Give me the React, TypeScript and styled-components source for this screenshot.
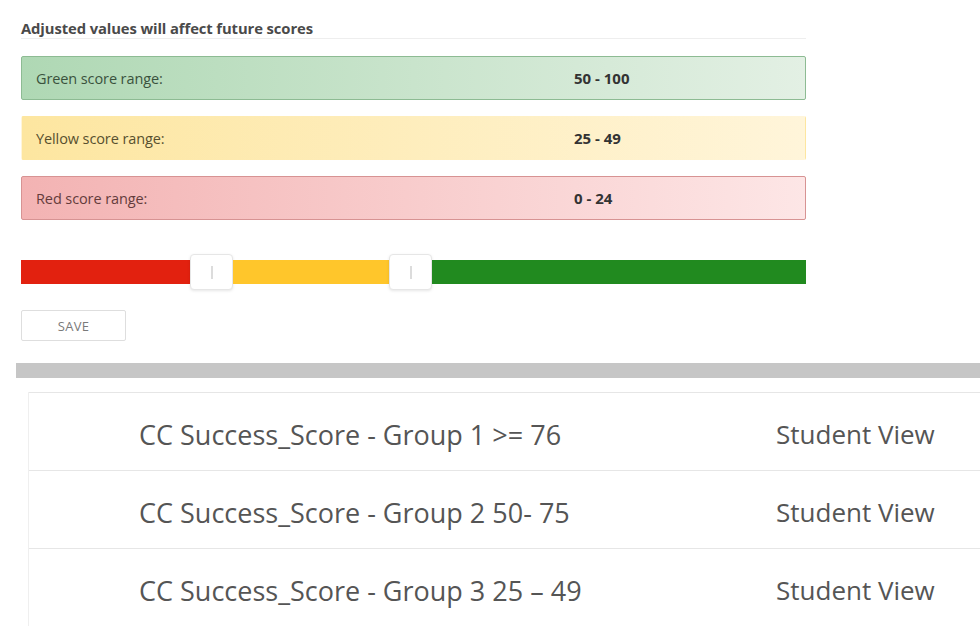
import React from 'react';
import styled, { createGlobalStyle } from 'styled-components';

const GlobalStyle = createGlobalStyle`
    body {
        margin: 0;
        background: #fff;
        font-family: "Open Sans", "Noto Sans", sans-serif;
        overflow: hidden;
    }
`;

type Tone = 'green' | 'yellow' | 'red';

const TONES: Record<Tone, { from: string, to: string, border: string, text: string }> = {
    green: { from: '#afd8b4', to: '#e3f0e4', border: '#8dbb93', text: '#3a523d' },
    yellow: { from: '#fde6a0', to: '#fff5da', border: 'transparent', text: '#57502f' },
    red: { from: '#f3b3b3', to: '#fde6e6', border: '#d79393', text: '#643c3c' },
};

const ranges: { tone: Tone, label: string, value: string }[] = [
    { tone: 'green', label: 'Green score range:', value: '50 - 100' },
    { tone: 'yellow', label: 'Yellow score range:', value: '25 - 49' },
    { tone: 'red', label: 'Red score range:', value: '0 - 24' },
];

const groups = [
    'CC Success_Score - Group 1 >= 76',
    'CC Success_Score - Group 2 50- 75',
    'CC Success_Score - Group 3 25 – 49',
];

export default function App() {
    return (
        <Page>
            <GlobalStyle />
            <Settings>
                <Title>Adjusted values will affect future scores</Title>
                <Ranges>
                    {ranges.map((r) => (
                        <RangeBox key={r.tone} $tone={r.tone}>
                            <RangeLabel $tone={r.tone}>{r.label}</RangeLabel>
                            <RangeValue>{r.value}</RangeValue>
                        </RangeBox>
                    ))}
                </Ranges>
                <Slider>
                    <Segment $color="#e2210f" $width={169} />
                    <Thumb><Grip /></Thumb>
                    <Segment $color="#ffc62b" $width={156} />
                    <Thumb><Grip /></Thumb>
                    <Segment $color="#218a1f" $width={374} />
                </Slider>
                <SaveButton>SAVE</SaveButton>
            </Settings>
            <Divider />
            <GroupList>
                {groups.map((g) => (
                    <GroupRow key={g}>
                        <GroupName>{g}</GroupName>
                        <GroupLink>Student View</GroupLink>
                    </GroupRow>
                ))}
            </GroupList>
        </Page>
    );
}

const Page = styled.div`
    width: 980px;
    height: 634px;
    overflow: hidden;
`;

const Settings = styled.div`
    width: 785px;
    padding: 20px 0 0 21px;
`;

const Title = styled.div`
    font-size: 14.8px;
    line-height: 17px;
    font-weight: 700;
    color: #4a4a4a;
    letter-spacing: -0.1px;
    padding-bottom: 1px;
    border-bottom: 1px solid #eeeeee;
`;

const Ranges = styled.div`
    display: flex;
    flex-direction: column;
    gap: 16px;
    margin-top: 17px;
`;

const RangeBox = styled.div<{ $tone: Tone }>`
    display: grid;
    grid-template-columns: 552px 1fr;
    align-items: center;
    height: 44px;
    box-sizing: border-box;
    border: 1px solid ${({ $tone }) => TONES[$tone].border};
    border-radius: 2px;
    background: linear-gradient(90deg, ${({ $tone }) => TONES[$tone].from}, ${({ $tone }) => TONES[$tone].to});
`;

const RangeLabel = styled.div<{ $tone: Tone }>`
    padding-left: 14px;
    font-size: 14.5px;
    letter-spacing: -0.1px;
    color: ${({ $tone }) => TONES[$tone].text};
`;

const RangeValue = styled.div`
    font-size: 15px;
    font-weight: 700;
    color: #333;
`;

const Slider = styled.div`
    display: flex;
    align-items: center;
    height: 36px;
    margin-top: 34px;
`;

const Segment = styled.div<{ $color: string, $width: number }>`
    height: 24px;
    width: ${({ $width }) => $width}px;
    flex: none;
    background: ${({ $color }) => $color};
`;

const Thumb = styled.div`
    display: flex;
    align-items: center;
    justify-content: center;
    width: 43px;
    height: 36px;
    box-sizing: border-box;
    flex: none;
    background: #fff;
    border: 1px solid #e6e6e6;
    border-radius: 4px;
    box-shadow: 0 1px 3px rgba(0, 0, 0, 0.1);
`;

const Grip = styled.div`
    width: 2px;
    height: 13px;
    background: #dcdcdc;
`;

const SaveButton = styled.button`
    display: block;
    width: 105px;
    height: 31px;
    margin-top: 20px;
    padding: 0;
    background: #fff;
    border: 1px solid #dedede;
    border-radius: 2px;
    font-family: "Open Sans", sans-serif;
    font-size: 13px;
    color: #7a7a7a;
    letter-spacing: 0.3px;
`;

const Divider = styled.div`
    height: 15px;
    margin: 22px 0 0 16px;
    background: #c6c6c6;
`;

const GroupList = styled.div`
    margin: 14px 0 0 28px;
    border-left: 1px solid #efefef;
`;

const GroupRow = styled.div`
    display: flex;
    align-items: center;
    height: 78px;
    box-sizing: border-box;
    padding-top: 5px;
    border-top: 1px solid #e6e6e6;
`;

const GroupName = styled.div`
    width: 637px;
    padding-left: 110px;
    font-size: 27px;
    color: #555;
    white-space: nowrap;
`;

const GroupLink = styled.div`
    font-size: 26px;
    color: #555;
    white-space: nowrap;
`;
